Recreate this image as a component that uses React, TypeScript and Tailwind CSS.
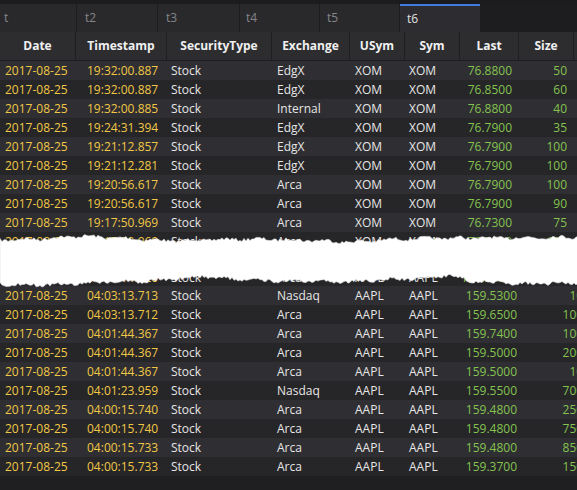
const tabs = [
  { name: "t", w: "w-[77px]", pad: "pl-[4px]" },
  { name: "t2", w: "w-[81px]", pad: "pl-[8px]" },
  { name: "t3", w: "w-[82px]", pad: "pl-[8px]" },
  { name: "t4", w: "w-[80px]", pad: "pl-[6px]" },
  { name: "t5", w: "w-[80px]", pad: "pl-[7px]" },
];

const headers = [
  { name: "Date", w: "w-[76px]" },
  { name: "Timestamp", w: "w-[91px]" },
  { name: "SecurityType", w: "w-[105px]" },
  { name: "Exchange", w: "w-[78px]" },
  { name: "USym", w: "w-[55px]" },
  { name: "Sym", w: "w-[55px]" },
  { name: "Last", w: "w-[59px]" },
  { name: "Size", w: "w-[55px]" },
];

type Row = [string, string, string, string, string];

// rows 9-11 sit under the torn strip
const topRows: Row[] = [
  ["19:32:00.887", "EdgX", "XOM", "76.8800", "50"],
  ["19:32:00.887", "EdgX", "XOM", "76.8500", "60"],
  ["19:32:00.885", "Internal", "XOM", "76.8800", "40"],
  ["19:24:31.394", "EdgX", "XOM", "76.7900", "35"],
  ["19:21:12.857", "EdgX", "XOM", "76.7900", "100"],
  ["19:21:12.281", "EdgX", "XOM", "76.7900", "100"],
  ["19:20:56.617", "Arca", "XOM", "76.7900", "100"],
  ["19:20:56.617", "Arca", "XOM", "76.7900", "90"],
  ["19:17:50.969", "Arca", "XOM", "76.7300", "75"],
  ["19:17:50.969", "Arca", "XOM", "76.7300", "100"],
  ["19:17:42.120", "Arca", "XOM", "76.7300", "100"],
  ["04:03:14.020", "Arca", "AAPL", "159.5300", "100"],
];

const bottomRows: Row[] = [
  ["04:03:13.713", "Nasdaq", "AAPL", "159.5300", "100"],
  ["04:03:13.712", "Arca", "AAPL", "159.6500", "1000"],
  ["04:01:44.367", "Arca", "AAPL", "159.7400", "1000"],
  ["04:01:44.367", "Arca", "AAPL", "159.5000", "2000"],
  ["04:01:44.367", "Arca", "AAPL", "159.5000", "100"],
  ["04:01:23.959", "Nasdaq", "AAPL", "159.5500", "7000"],
  ["04:00:15.740", "Arca", "AAPL", "159.4800", "2500"],
  ["04:00:15.740", "Arca", "AAPL", "159.4800", "7500"],
  ["04:00:15.733", "Arca", "AAPL", "159.4800", "8500"],
  ["04:00:15.733", "Arca", "AAPL", "159.3700", "1500"],
];

function DataRow({ row, light, wide, h = "h-[19px]" }: { row: Row; light: boolean; wide?: boolean; h?: string }) {
  const [ts, exch, sym, last, size] = row;
  return (
    <div className={`flex ${h} items-center whitespace-nowrap font-medium ${light ? "bg-[#2f2e32]" : "bg-[#262528]"}`}>
      <div className="w-[76px] shrink-0 pl-[5px] text-[#f0c846]">2017-08-25</div>
      <div className="w-[91px] shrink-0 pl-[11px] text-[#f0c846]">{ts}</div>
      <div className="w-[105px] shrink-0 pl-[4px] text-[#e6e6e6]">Stock</div>
      <div className="w-[78px] shrink-0 pl-[5px] text-[#e6e6e6]">{exch}</div>
      <div className="w-[55px] shrink-0 pl-[5px] text-[#e6e6e6]">{sym}</div>
      <div className="w-[55px] shrink-0 pl-[4px] text-[#e6e6e6]">{sym}</div>
      <div className={`${wide ? "w-[64px]" : "w-[59px]"} shrink-0 pr-[7px] text-right text-[#84c350]`}>{last}</div>
      <div className={`${wide ? "w-[73px]" : "w-[55px]"} shrink-0 pr-[7px] text-right text-[#84c350]`}>{size}</div>
    </div>
  );
}

function edge(keys: [number, number][], seed: number) {
  let s = seed;
  const rand = () => {
    s = (s * 16807) % 2147483647;
    return s / 2147483647;
  };
  const pts: [number, number][] = [];
  for (let x = 0; x <= 578; x += 2) {
    let i = 0;
    while (i < keys.length - 2 && keys[i + 1][0] < x) i++;
    const [x0, y0] = keys[i];
    const [x1, y1] = keys[i + 1];
    const t = Math.min(1, Math.max(0, (x - x0) / (x1 - x0)));
    const y = y0 + (y1 - y0) * t + Math.sin(x / 5.3) * 0.9 + (rand() - 0.5) * 3.2;
    pts.push([x, y]);
  }
  return pts;
}

function Tear() {
  const top = edge(
    [[0, 240], [40, 239], [80, 236], [120, 238], [170, 241], [200, 240], [250, 239], [300, 240], [354, 242], [400, 239], [450, 238], [500, 238], [578, 237]],
    7
  );
  const bottom = edge(
    [[0, 284], [50, 285], [100, 282], [150, 281], [205, 276], [240, 280], [290, 281], [340, 282], [400, 279], [430, 278], [450, 275], [470, 281], [520, 284], [578, 283]],
    13
  ).reverse();
  const d =
    "M" + top.map(([x, y]) => `${x},${y.toFixed(1)}`).join(" L") + " L" + bottom.map(([x, y]) => `${x},${y.toFixed(1)}`).join(" L") + " Z";
  return (
    <svg className="pointer-events-none absolute left-0 top-0" width="577" height="490" viewBox="0 0 577 490">
      <path d={d} fill="#ffffff" stroke="#d8d8d8" strokeWidth="0.6" />
    </svg>
  );
}

export default function App() {
  return (
    <div
      className="relative h-[490px] w-[577px] overflow-hidden bg-[#1f1f22] text-[12px]"
      style={{ fontFamily: '"Open Sans", "Noto Sans", sans-serif' }}
    >
      <div className="h-[4px] bg-[#1c1c1f]" />
      <div className="flex h-[28px] bg-[#1d1d20]">
        {tabs.map((t) => (
          <div key={t.name} className={`${t.w} ${t.pad} flex shrink-0 items-center border-r border-[#1e1e21] bg-[#29292c] text-[#85858a]`}>
            {t.name}
          </div>
        ))}
        <div className="flex w-[80px] shrink-0 items-center border-t-2 border-[#3f7be0] bg-[#2d2d31] pl-[7px] text-[#e2e2e4]">t6</div>
      </div>
      <div className="flex h-[29px] border-b border-[#1e1e21] bg-[#2d2d30] font-bold text-[#f0f0f0]">
        {headers.map((h) => (
          <div key={h.name} className={`${h.w} flex shrink-0 items-center justify-center border-r border-[#1f1f22]`}>
            {h.name}
          </div>
        ))}
        <div className="flex-1" />
      </div>
      <div>
        {topRows.map((r, i) => (
          <DataRow key={"t" + i} row={r} light={i % 2 === 0} h={i === 11 ? "h-[16px]" : "h-[19px]"} />
        ))}
        {bottomRows.map((r, i) => (
          <DataRow key={"b" + i} row={r} light={i % 2 === 0} wide />
        ))}
      </div>
      <Tear />
    </div>
  );
}
